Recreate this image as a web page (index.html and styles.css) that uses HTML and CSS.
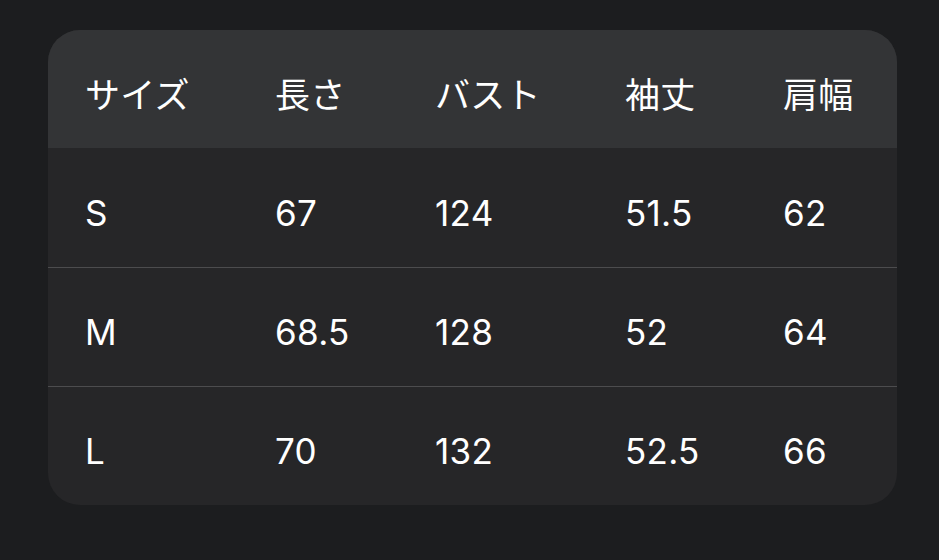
FILE: index.html
```html
<!DOCTYPE html>
<html lang="ja">
<head>
<meta charset="utf-8">
<link rel="stylesheet" href="styles.css">
</head>
<body>
<div class="card">
  <div class="row head">
    <div>サイズ</div><div>長さ</div><div>バスト</div><div>袖丈</div><div>肩幅</div>
  </div>
  <div class="row">
    <div>S</div><div>67</div><div>124</div><div>51.5</div><div>62</div>
  </div>
  <div class="row">
    <div>M</div><div>68.5</div><div>128</div><div>52</div><div>64</div>
  </div>
  <div class="row last">
    <div>L</div><div>70</div><div>132</div><div>52.5</div><div>66</div>
  </div>
</div>
</body>
</html>
```
FILE: styles.css
```css
html, body {
  margin: 0;
  padding: 0;
  background: #1c1d1f;
}
body {
  padding: 30px 0 0 48px;
  font-family: Inter, "Noto Sans CJK JP", sans-serif;
  color: #ffffff;
}
.card {
  width: 849px;
  height: 475px;
  border-radius: 32px;
  overflow: hidden;
  background: #262628;
}
.row {
  box-sizing: border-box;
  display: grid;
  grid-template-columns: 190px 160px 190px 158px 1fr;
  align-items: center;
  padding: 10px 0 0 37px;
  height: 119px;
  border-bottom: 1px solid #4c4c4e;
  font-size: 35px;
  letter-spacing: 0.3px;
  line-height: 1;
}
.row.head {
  background: #333436;
  border-bottom: none;
  height: 118px;
  padding-top: 12px;
}
.row.last {
  border-bottom: none;
  height: 118px;
}
.card > .row:nth-child(2) {
  height: 120px;
  padding-top: 12px;
}
```
